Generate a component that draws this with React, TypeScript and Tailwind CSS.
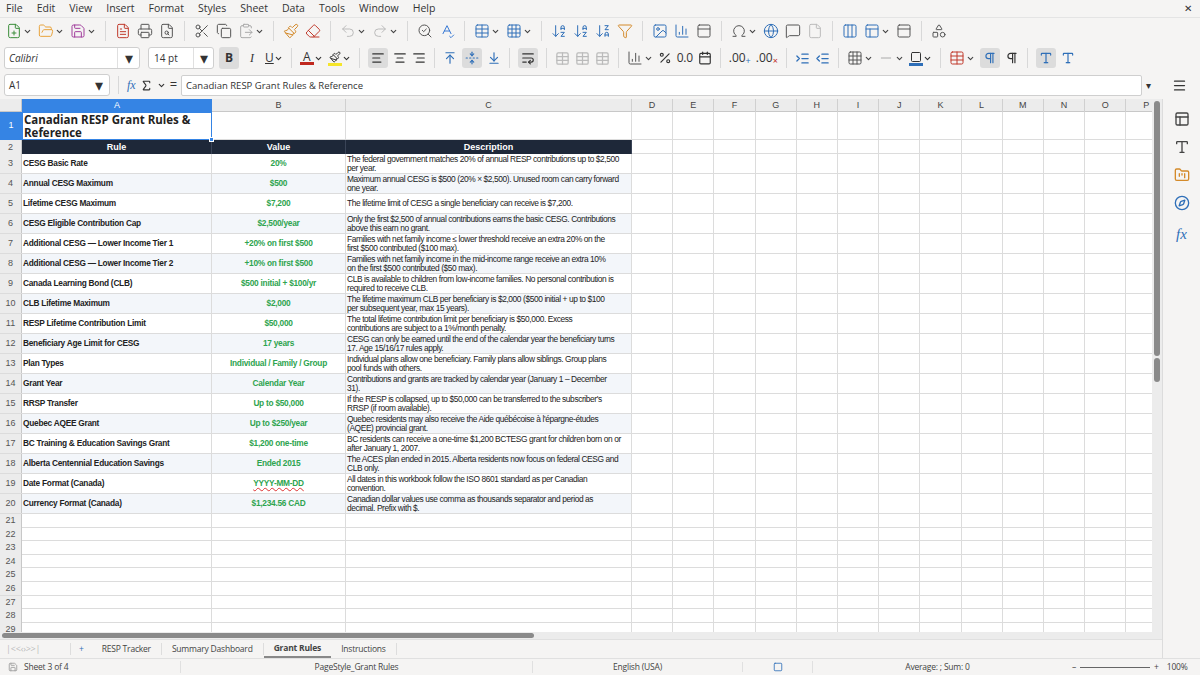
import {
  FilePlus, FolderOpen, Save, FileText, Printer, FileSearch, Scissors, Copy, ClipboardPaste,
  Paintbrush, Eraser, Undo2, Redo2, SearchCheck, SpellCheck, Table, Grid3x3, ArrowDownAZ,
  ArrowDownZA, Filter, Image, BarChart3, Omega, Globe, MessageSquare, File, Columns3,
  PanelTop, Shapes, AlignLeft, AlignCenter, AlignRight, ArrowUpToLine, FoldVertical,
  ArrowDownToLine, WrapText, Percent, Calendar, IndentIncrease, IndentDecrease, Square,
  Minus, Pilcrow, ChevronDown, Menu, PanelsTopLeft, Type, FolderKanban, Compass, Sigma,
} from "lucide-react";

const F = { fontFamily: '"Open Sans", "Noto Sans", sans-serif' };
const C = { fontFamily: '"Liberation Sans", Arial, sans-serif' };

const rows: [string, string, string[]][] = [
  ["CESG Basic Rate", "20%", ["The federal government matches 20% of annual RESP contributions up to $2,500", "per year."]],
  ["Annual CESG Maximum", "$500", ["Maximum annual CESG is $500 (20% × $2,500). Unused room can carry forward", "one year."]],
  ["Lifetime CESG Maximum", "$7,200", ["The lifetime limit of CESG a single beneficiary can receive is $7,200."]],
  ["CESG Eligible Contribution Cap", "$2,500/year", ["Only the first $2,500 of annual contributions earns the basic CESG. Contributions", "above this earn no grant."]],
  ["Additional CESG — Lower Income Tier 1", "+20% on first $500", ["Families with net family income ≤ lower threshold receive an extra 20% on the", "first $500 contributed ($100 max)."]],
  ["Additional CESG — Lower Income Tier 2", "+10% on first $500", ["Families with net family income in the mid-income range receive an extra 10%", "on the first $500 contributed ($50 max)."]],
  ["Canada Learning Bond (CLB)", "$500 initial + $100/yr", ["CLB is available to children from low-income families. No personal contribution is", "required to receive CLB."]],
  ["CLB Lifetime Maximum", "$2,000", ["The lifetime maximum CLB per beneficiary is $2,000 ($500 initial + up to $100", "per subsequent year, max 15 years)."]],
  ["RESP Lifetime Contribution Limit", "$50,000", ["The total lifetime contribution limit per beneficiary is $50,000. Excess", "contributions are subject to a 1%/month penalty."]],
  ["Beneficiary Age Limit for CESG", "17 years", ["CESG can only be earned until the end of the calendar year the beneficiary turns", "17. Age 15/16/17 rules apply."]],
  ["Plan Types", "Individual / Family / Group", ["Individual plans allow one beneficiary. Family plans allow siblings. Group plans", "pool funds with others."]],
  ["Grant Year", "Calendar Year", ["Contributions and grants are tracked by calendar year (January 1 – December", "31)."]],
  ["RRSP Transfer", "Up to $50,000", ["If the RESP is collapsed, up to $50,000 can be transferred to the subscriber's", "RRSP (if room available)."]],
  ["Quebec AQEE Grant", "Up to $250/year", ["Quebec residents may also receive the Aide québécoise à l'épargne-études", "(AQEE) provincial grant."]],
  ["BC Training & Education Savings Grant", "$1,200 one-time", ["BC residents can receive a one-time $1,200 BCTESG grant for children born on or", "after January 1, 2007."]],
  ["Alberta Centennial Education Savings", "Ended 2015", ["The ACES plan ended in 2015. Alberta residents now focus on federal CESG and", "CLB only."]],
  ["Date Format (Canada)", "YYYY-MM-DD", ["All dates in this workbook follow the ISO 8601 standard as per Canadian", "convention."]],
  ["Currency Format (Canada)", "$1,234.56 CAD", ["Canadian dollar values use comma as thousands separator and period as", "decimal. Prefix with $."]],
];

const extra = ["D", "E", "F", "G", "H", "I", "J", "K", "L", "M", "N", "O", "P"];
const cols = "grid grid-cols-[22px_190px_134px_286px_repeat(13,41.2px)]";

function I({ c, k = "text-[#555]", d }: { c: any; k?: string; d?: boolean }) {
  const Ic = c;
  return (
    <span className="flex items-center">
      <Ic size={16} strokeWidth={1.5} className={k} />
      {d && <ChevronDown size={9} className="text-[#444] ml-[1px]" strokeWidth={3} />}
    </span>
  );
}
const Sep = () => <span className="w-px h-[20px] bg-[#d8d8d8] mx-[3px]" />;

function Extra() {
  return (
    <>
      {extra.map((e) => (
        <div key={e} className="border-r border-[#dcdcdc]" />
      ))}
    </>
  );
}

export default function App() {
  return (
    <div className="w-[1200px] h-[675px] bg-[#f5f4f3] overflow-hidden flex flex-col text-[#333]" style={F}>
      {/* menu */}
      <div className="h-[17px] flex items-center gap-[14px] px-[6px] text-[10.5px]">
        {["File", "Edit", "View", "Insert", "Format", "Styles", "Sheet", "Data", "Tools", "Window", "Help"].map((m) => (
          <span key={m}>{m}</span>
        ))}
        <span className="ml-auto text-[10px] pr-[2px]">✕</span>
      </div>
      {/* toolbar 1 */}
      <div className="h-[27px] flex items-center gap-[6px] px-[6px] border-t border-[#e4e4e4]">
        <I c={FilePlus} k="text-[#3a8d3a]" d />
        <I c={FolderOpen} k="text-[#e8a33c]" d />
        <I c={Save} k="text-[#a03c9c]" d />
        <Sep />
        <I c={FileText} k="text-[#c0392b]" />
        <I c={Printer} />
        <I c={FileSearch} />
        <Sep />
        <I c={Scissors} />
        <I c={Copy} />
        <I c={ClipboardPaste} k="text-[#aaa]" d />
        <Sep />
        <I c={Paintbrush} k="text-[#d48a2a]" />
        <I c={Eraser} k="text-[#c0392b]" />
        <Sep />
        <I c={Undo2} k="text-[#bbb]" d />
        <I c={Redo2} k="text-[#bbb]" d />
        <Sep />
        <I c={SearchCheck} />
        <I c={SpellCheck} k="text-[#3a7bd5]" />
        <Sep />
        <I c={Table} k="text-[#2f6fb8]" d />
        <I c={Grid3x3} k="text-[#2f6fb8]" d />
        <Sep />
        <I c={ArrowDownAZ} k="text-[#2f6fb8]" />
        <I c={ArrowDownAZ} k="text-[#2f6fb8]" />
        <I c={ArrowDownZA} k="text-[#2f6fb8]" />
        <I c={Filter} k="text-[#d48a2a]" />
        <Sep />
        <I c={Image} k="text-[#2f6fb8]" />
        <I c={BarChart3} k="text-[#2f6fb8]" />
        <I c={PanelTop} />
        <Sep />
        <I c={Omega} d />
        <I c={Globe} k="text-[#2f6fb8]" />
        <I c={MessageSquare} />
        <I c={File} k="text-[#bbb]" />
        <Sep />
        <I c={Columns3} k="text-[#2f6fb8]" />
        <I c={PanelsTopLeft} k="text-[#2f6fb8]" d />
        <I c={PanelTop} />
        <Sep />
        <I c={Shapes} />
      </div>
      {/* toolbar 2 */}
      <div className="h-[28px] flex items-center gap-[5px] px-[4px]">
        <div className="flex h-[22px] w-[136px] bg-white border border-[#cfcfcf] rounded-[3px]">
          <span className="flex-1 px-[4px] text-[10px] italic leading-[20px]">Calibri</span>
          <span className="w-[22px] flex items-center justify-center border-l border-[#e0e0e0]">▾</span>
        </div>
        <div className="flex h-[22px] w-[66px] bg-white border border-[#cfcfcf] rounded-[3px] ml-[3px]">
          <span className="flex-1 px-[5px] text-[10px] leading-[20px]">14 pt</span>
          <span className="w-[20px] flex items-center justify-center border-l border-[#e0e0e0]">▾</span>
        </div>
        <span className="w-[20px] h-[22px] bg-[#dcdcdc] rounded-[3px] flex items-center justify-center font-bold text-[12px]">B</span>
        <span className="w-[16px] text-center italic text-[12px]" style={{ fontFamily: "serif" }}>I</span>
        <span className="flex items-center text-[12px] underline">U<ChevronDown size={9} strokeWidth={3} /></span>
        <Sep />
        <span className="flex items-center"><span className="flex flex-col items-center leading-[11px] text-[12px]">A<span className="w-[14px] h-[3px] bg-[#c0281e]" /></span><ChevronDown size={9} strokeWidth={3} /></span>
        <span className="flex items-center"><span className="flex flex-col items-center"><Paintbrush size={12} /><span className="w-[14px] h-[3px] bg-[#f5e52a]" /></span><ChevronDown size={9} strokeWidth={3} /></span>
        <Sep />
        <span className="bg-[#dcdcdc] rounded-[3px] p-[3px]"><AlignLeft size={14} /></span>
        <AlignCenter size={14} />
        <AlignRight size={14} />
        <Sep />
        <ArrowUpToLine size={14} className="text-[#2f6fb8]" />
        <span className="bg-[#dcdcdc] rounded-[3px] p-[3px]"><FoldVertical size={14} className="text-[#2f6fb8]" /></span>
        <ArrowDownToLine size={14} className="text-[#2f6fb8]" />
        <Sep />
        <span className="bg-[#dcdcdc] rounded-[3px] p-[3px]"><WrapText size={14} /></span>
        <Sep />
        <Table size={15} className="text-[#bbb]" />
        <Table size={15} className="text-[#bbb]" />
        <Table size={15} className="text-[#bbb]" />
        <Sep />
        <I c={BarChart3} d />
        <Percent size={14} />
        <span className="text-[12px] tracking-tight">0.0</span>
        <Calendar size={14} />
        <Sep />
        <span className="text-[12px]">.00<sub className="text-[#2f6fb8]">+</sub></span>
        <span className="text-[12px]">.00<sub className="text-[#c0281e]">×</sub></span>
        <Sep />
        <IndentIncrease size={15} className="text-[#2f6fb8]" />
        <IndentDecrease size={15} className="text-[#2f6fb8]" />
        <Sep />
        <I c={Grid3x3} d />
        <I c={Minus} k="text-[#aaa]" d />
        <span className="flex items-center"><span className="flex flex-col items-center"><Square size={12} /><span className="w-[14px] h-[3px] bg-[#2f6fb8]" /></span><ChevronDown size={9} strokeWidth={3} /></span>
        <Sep />
        <I c={Table} k="text-[#c0392b]" d />
        <span className="bg-[#dcdcdc] rounded-[3px] p-[3px]"><Pilcrow size={14} className="text-[#2f6fb8]" /></span>
        <Pilcrow size={14} />
        <Sep />
        <span className="bg-[#dcdcdc] rounded-[3px] p-[3px]"><Type size={14} className="text-[#2f6fb8]" /></span>
        <Type size={14} className="text-[#2f6fb8]" />
      </div>
      {/* formula bar */}
      <div className="h-[26px] flex items-center px-[4px] gap-[4px]">
        <div className="flex h-[22px] w-[106px] bg-white border border-[#cfcfcf] rounded-[3px]">
          <span className="flex-1 px-[4px] text-[10px] leading-[20px]">A1</span>
          <span className="w-[20px] flex items-center justify-center">▾</span>
        </div>
        <span className="w-px h-[18px] bg-[#d8d8d8] mx-[4px]" />
        <span className="italic text-[#2f6fb8] text-[12px]" style={{ fontFamily: "serif" }}>fx</span>
        <Sigma size={13} />
        <ChevronDown size={9} strokeWidth={3} />
        <span className="text-[13px]">=</span>
        <div className="flex-1 h-[21px] bg-white border border-[#cfcfcf] rounded-[2px] text-[9.5px] leading-[19px] px-[4px]">Canadian RESP Grant Rules &amp; Reference</div>
        <span className="w-[12px] text-[10px]">▾</span>
        <span className="w-[34px] flex justify-center"><Menu size={15} /></span>
      </div>
      {/* sheet + sidebar */}
      <div className="flex-1 flex min-h-0 mt-[1px]">
        <div className="flex-1 flex flex-col min-w-0">
          <div className="flex flex-1 min-h-0">
            <div className="w-[1152px] overflow-hidden bg-white" style={C}>
              {/* column header */}
              <div className={`${cols} h-[13px] bg-[#ececec] text-[9px] text-[#444] border-b border-[#c8c8c8]`}>
                <div className="border-r border-[#c8c8c8]" />
                <div className="bg-[#3584e4] text-white text-center leading-[13px]">A</div>
                {["B", "C", ...extra].map((h) => (
                  <div key={h} className="text-center leading-[13px] border-r border-[#d0d0d0]">{h}</div>
                ))}
              </div>
              {/* row 1 */}
              <div className={`${cols} h-[28px] border-b border-[#dcdcdc]`}>
                <div className="bg-[#3584e4] text-white text-[9px] flex items-center justify-center">1</div>
                <div className="border-[1.5px] border-[#3584e4] font-bold text-[11.5px] leading-[13px] text-[#222] pl-[1px] relative" style={F}>
                  Canadian RESP Grant Rules &amp;<br />Reference
                  <span className="absolute -right-[3px] -bottom-[3px] w-[5px] h-[5px] bg-[#3584e4] border border-white" />
                </div>
                <div className="border-r border-[#dcdcdc]" />
                <div className="border-r border-[#dcdcdc]" />
                <Extra />
              </div>
              {/* row 2 header */}
              <div className={`${cols} h-[14px] border-b border-[#dcdcdc]`}>
                <div className="bg-[#ececec] text-[9px] text-[#555] text-center leading-[14px] border-r border-[#c8c8c8]">2</div>
                {["Rule", "Value", "Description"].map((h) => (
                  <div key={h} className="bg-[#1e2839] text-white font-bold text-[9px] text-center leading-[14px] border-r border-[#3a4457]">{h}</div>
                ))}
                <Extra />
              </div>
              {rows.map(([r, v, d], i) => (
                <div key={r} className={`${cols} h-[20px] border-b border-[#dcdcdc]`}>
                  <div className="bg-[#ececec] text-[9px] text-[#555] flex items-center justify-center border-r border-[#c8c8c8]">{i + 3}</div>
                  <div className={`font-bold text-[8.3px] tracking-[-0.25px] text-[#222] flex items-center pl-[1px] border-r border-[#dcdcdc] ${i % 2 ? "bg-[#f3f6fa]" : ""}`}>{r}</div>
                  <div className={`font-bold text-[8.3px] tracking-[-0.25px] text-[#2ea44f] flex items-center justify-center border-r border-[#dcdcdc] ${i % 2 ? "bg-[#f3f6fa]" : ""} ${v === "YYYY-MM-DD" ? "underline decoration-wavy decoration-[#d33]" : ""}`}>{v}</div>
                  <div className={`text-[8.4px] tracking-[-0.4px] leading-[9px] text-[#222] whitespace-nowrap overflow-hidden pl-[1px] flex flex-col justify-center border-r border-[#dcdcdc] ${i % 2 ? "bg-[#f3f6fa]" : ""}`}>
                    {d.map((l) => <span key={l}>{l}</span>)}
                  </div>
                  <Extra />
                </div>
              ))}
              {[21, 22, 23, 24, 25, 26, 27, 28, 29].map((n) => (
                <div key={n} className={`${cols} h-[13.6px] border-b border-[#dcdcdc]`}>
                  <div className="bg-[#ececec] text-[9px] text-[#555] flex items-center justify-center border-r border-[#c8c8c8]">{n}</div>
                  <div className="border-r border-[#dcdcdc]" />
                  <div className="border-r border-[#dcdcdc]" />
                  <div className="border-r border-[#dcdcdc]" />
                  <Extra />
                </div>
              ))}
            </div>
            <div className="w-[10px] bg-[#ececec] flex flex-col items-center py-[2px]">
              <div className="w-[6px] h-[255px] bg-[#8a8a8a] rounded-[3px]" />
              <div className="mt-[2px] w-[6px] h-[24px] bg-[#8a8a8a] rounded-[3px]" />
            </div>
          </div>
          {/* h scrollbar */}
          <div className="h-[7px] bg-[#ececec] flex items-center px-[2px]">
            <div className="w-[532px] h-[5px] bg-[#8a8a8a] rounded-[3px]" />
          </div>
          {/* tabs */}
          <div className="h-[19px] flex items-center text-[8.5px] text-[#444] tracking-[-0.2px] border-t border-[#e0e0e0]">
            <span className="w-[70px] pl-[6px] text-[#bbb] text-[9px]">|&lt;&lt;‹›&gt;&gt;|</span>
            <span className="px-[8px] text-[#2f6fb8] border-l border-[#ddd]">+</span>
            <span className="px-[10px] border-r border-[#ddd]">RESP Tracker</span>
            <span className="px-[10px] border-r border-[#ddd]">Summary Dashboard</span>
            <span className="px-[10px] font-bold border-b-2 border-[#888] h-full flex items-center">Grant Rules</span>
            <span className="px-[10px] border-r border-[#ddd]">Instructions</span>
          </div>
        </div>
        {/* sidebar */}
        <div className="w-[38px] border-l border-[#dcdcdc] flex flex-col items-center gap-[12px] pt-[12px]">
          <PanelsTopLeft size={16} className="text-[#444]" />
          <Type size={16} className="text-[#444]" />
          <FolderKanban size={16} className="text-[#d48a2a]" />
          <Compass size={16} className="text-[#2f6fb8]" />
          <span className="italic text-[#2f6fb8] text-[15px]" style={{ fontFamily: "serif" }}>fx</span>
        </div>
      </div>
      {/* status */}
      <div className="h-[17px] flex items-center text-[8.5px] text-[#444] tracking-[-0.2px] border-t border-[#e0e0e0]">
        <span className="w-[180px] pl-[8px] flex items-center gap-[6px]"><Save size={10} className="text-[#999]" />Sheet 3 of 4</span>
        <span className="w-[352px] text-center border-l border-[#e0e0e0]">PageStyle_Grant Rules</span>
        <span className="w-[210px] text-center border-l border-[#e0e0e0]">English (USA)</span>
        <span className="w-[70px] flex justify-center border-l border-[#e0e0e0]"><Square size={10} className="text-[#2f6fb8]" /></span>
        <span className="w-[250px] text-center border-l border-[#e0e0e0]">Average: ; Sum: 0</span>
        <span className="flex-1 flex items-center gap-[4px] pl-[10px]">
          <span>–</span><span className="w-[70px] h-px bg-[#666]" /><span>+</span><span className="ml-[4px]">100%</span>
        </span>
      </div>
    </div>
  );
}
